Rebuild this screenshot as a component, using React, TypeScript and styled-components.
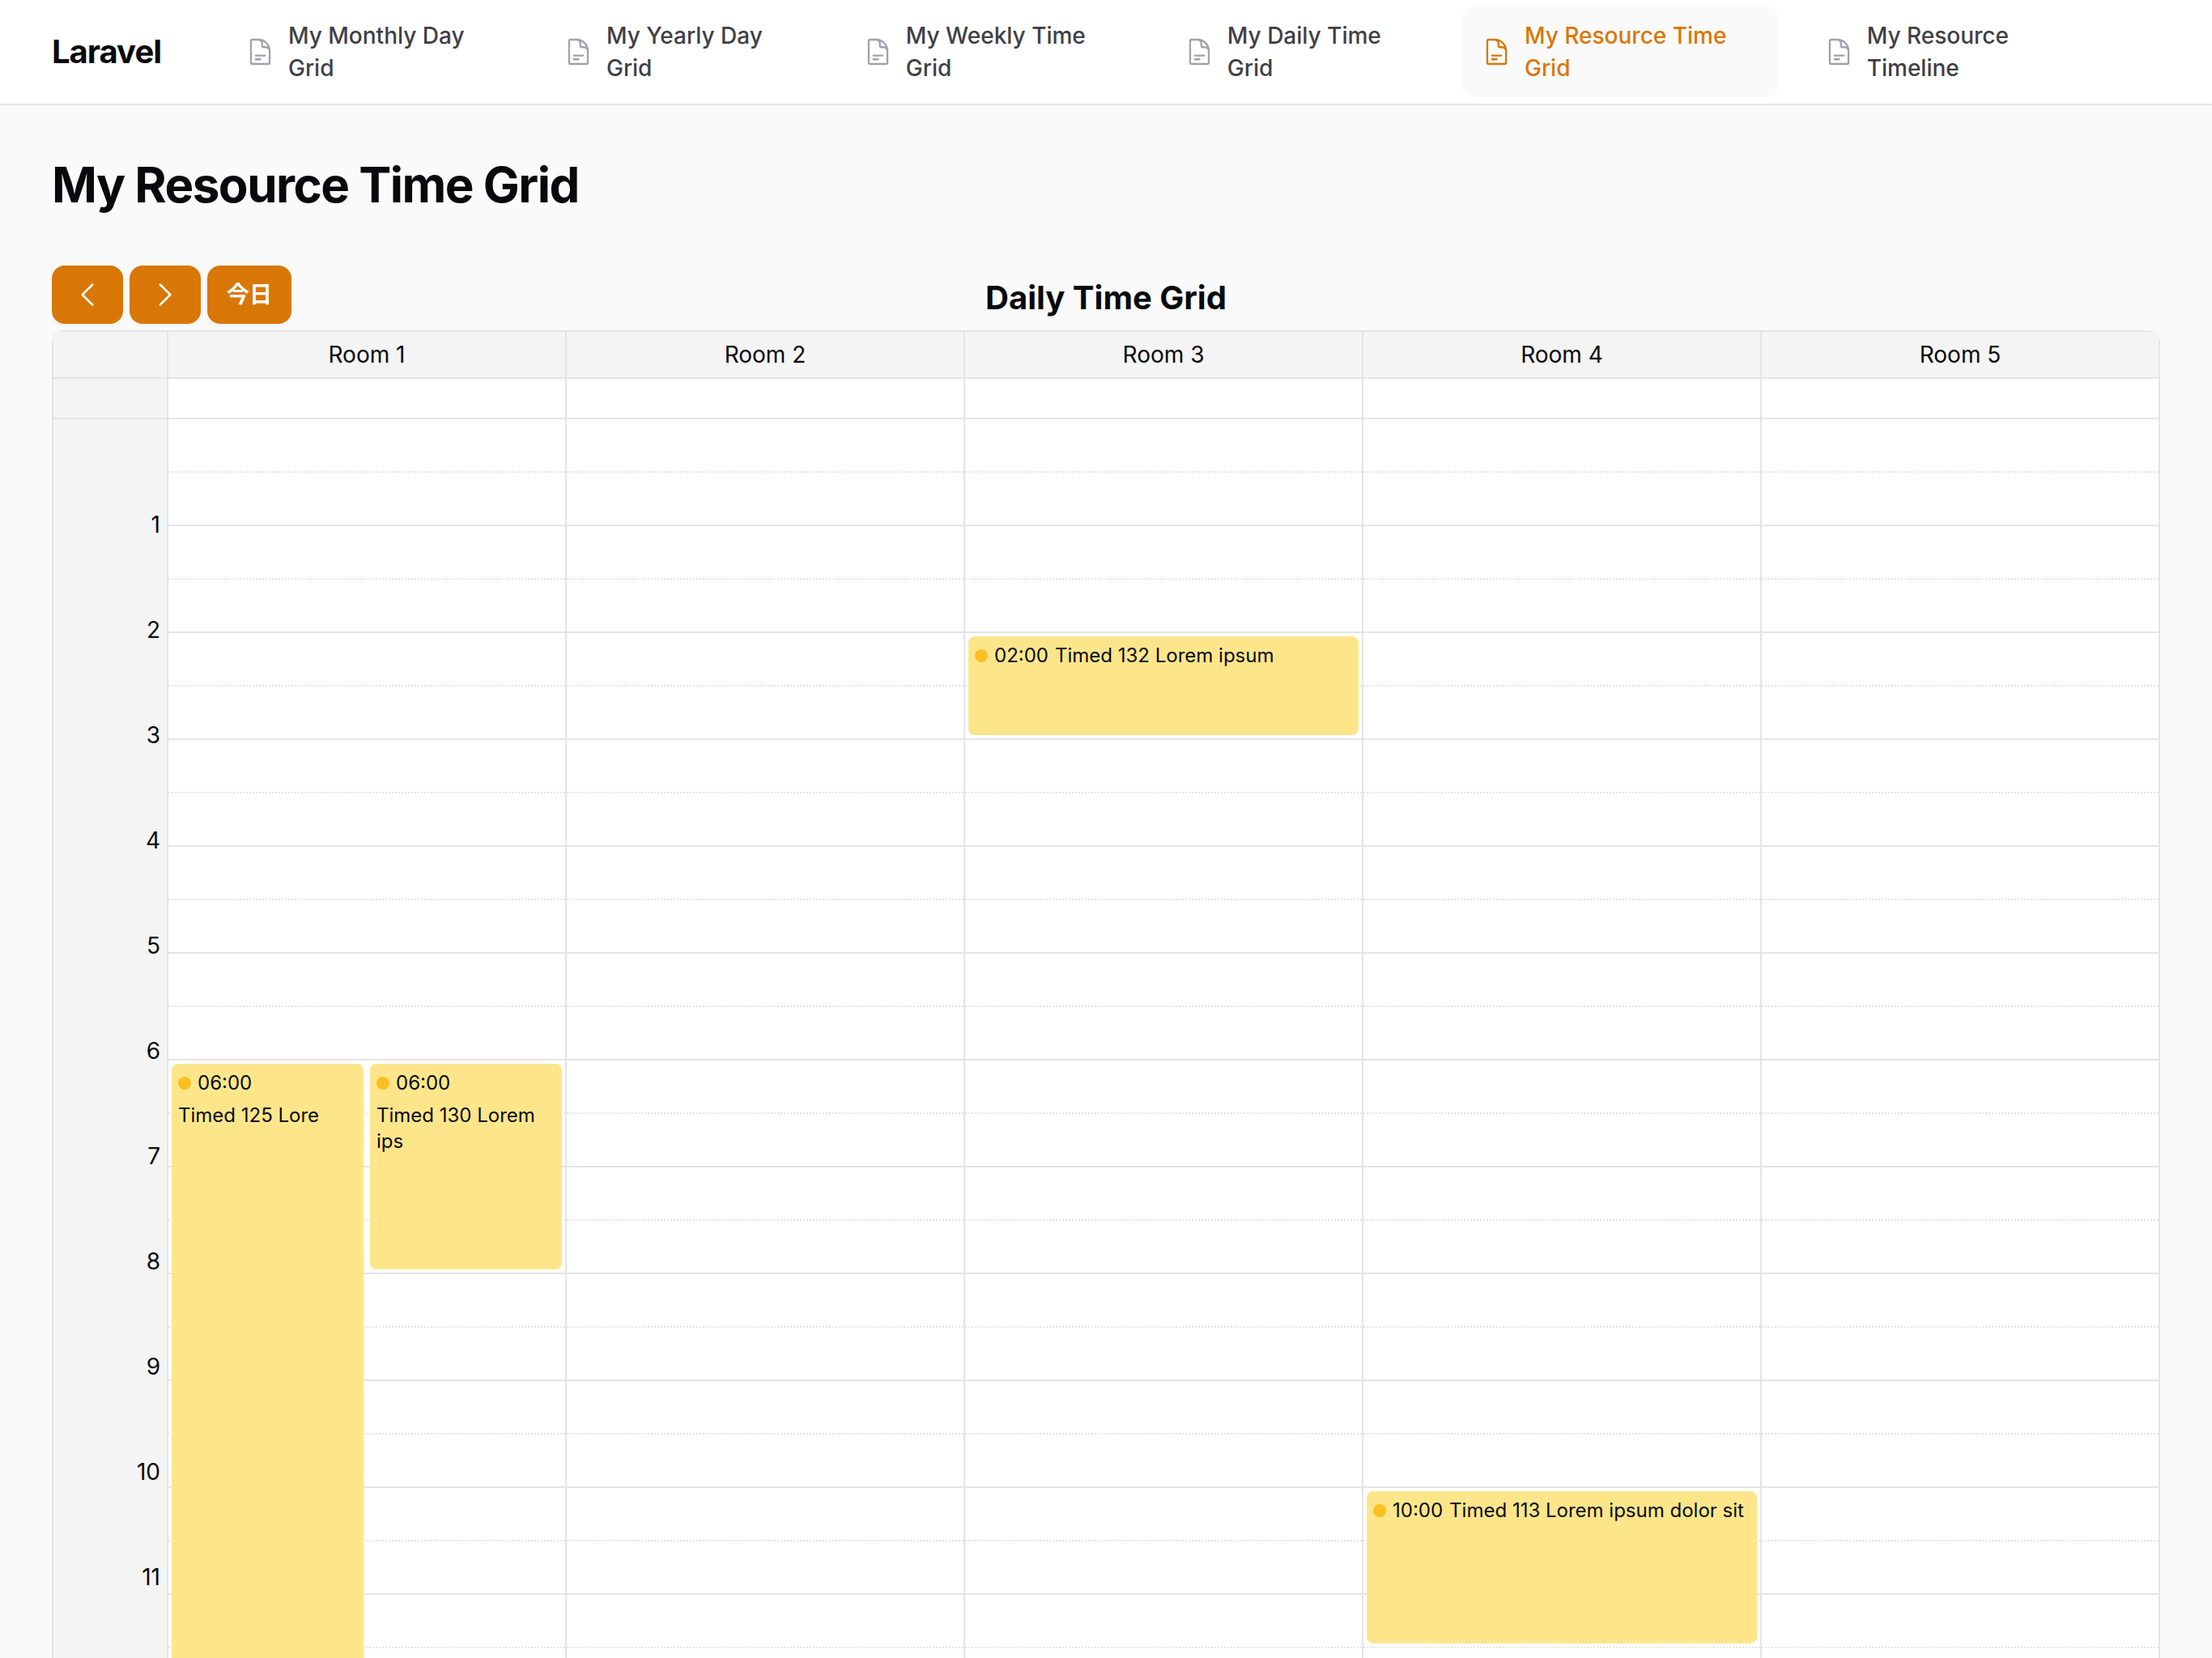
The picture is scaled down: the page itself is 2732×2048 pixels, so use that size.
import React from "react";
import styled, { createGlobalStyle } from "styled-components";

const GlobalStyle = createGlobalStyle`
  *, *::before, *::after { box-sizing: border-box; }
  body {
    margin: 0;
    background: #fafafa;
    color: #09090b;
    font-family: Inter, "Noto Sans CJK JP", sans-serif;
    font-size: 28px;
    line-height: 40px;
    -webkit-font-smoothing: antialiased;
  }
  h1, h2, ul { margin: 0; padding: 0; }
`;

const LINE = "#e4e4e7";
const SIDE = "#f4f4f5";
const HOUR = 132;
const HOURS = 12;

const Shell = styled.div`
  height: 100vh;
  overflow: hidden;
`;

const TopBar = styled.nav`
  display: flex;
  align-items: center;
  height: 128px;
  padding: 0 64px;
  background: #fff;
  box-shadow: 0 0 0 2px rgba(9, 9, 11, 0.05), 0 2px 4px rgba(0, 0, 0, 0.05);
`;

const Brand = styled.a`
  flex: none;
  margin-right: 80px;
  color: #09090b;
  font-size: 40px;
  font-weight: 700;
  letter-spacing: -0.025em;
  text-decoration: none;
`;

const NavList = styled.ul`
  display: flex;
  align-items: center;
  flex: 1;
  gap: 32px;
  min-width: 0;
  margin-right: 64px;
  list-style: none;
`;

const NavLink = styled.a<{ $active?: boolean }>`
  display: flex;
  align-items: center;
  gap: 16px;
  padding: 16px 24px;
  border-radius: 16px;
  background: ${(p) => (p.$active ? "#fafafa" : "transparent")};
  color: ${(p) => (p.$active ? "#d97706" : "#3f3f46")};
  font-weight: 500;
  text-decoration: none;

  svg {
    color: ${(p) => (p.$active ? "#d97706" : "#a1a1aa")};
  }
`;

const NavIcon = styled.svg`
  width: 40px;
  height: 40px;
  min-width: 0;
`;

const Page = styled.main`
  display: flex;
  flex-direction: column;
  gap: 64px;
  padding: 64px;
`;

const PageTitle = styled.h1`
  font-size: 60px;
  line-height: 72px;
  font-weight: 700;
  letter-spacing: -0.025em;
`;

const Toolbar = styled.div`
  display: grid;
  grid-template-columns: 1fr auto 1fr;
  align-items: center;
`;

const ButtonGroup = styled.div`
  display: flex;
  gap: 8px;
  padding-bottom: 8px;
`;

const Button = styled.button`
  display: flex;
  align-items: center;
  justify-content: center;
  padding: 16px 24px;
  border: 0;
  border-radius: 16px;
  background: #d97706;
  color: #fff;
  font: 600 28px/40px Inter, "Noto Sans CJK JP", sans-serif;
  box-shadow: 0 2px 4px rgba(0, 0, 0, 0.05);
  cursor: pointer;

  svg {
    width: 40px;
    height: 40px;
  }
`;

const CalendarTitle = styled.h2`
  font-size: 40px;
  line-height: 56px;
  font-weight: 700;
`;

const Calendar = styled.div`
  border: 2px solid ${LINE};
  border-radius: 16px;
`;

const Row = styled.div`
  display: grid;
  grid-template-columns: 140px repeat(5, minmax(0, 1fr));
`;

const HeadCell = styled.div`
  height: 58px;
  padding: 8px;
  border-bottom: 2px solid ${LINE};
  background: ${SIDE};
  text-align: center;

  & + & {
    border-left: 2px solid ${LINE};
  }
`;

const AllDayCell = styled.div<{ $side?: boolean }>`
  height: 50px;
  border-bottom: 2px solid ${LINE};
  border-left: ${(p) => (p.$side ? "0" : `2px solid ${LINE}`)};
  background: ${(p) => (p.$side ? SIDE : "#fff")};
`;

const HourColumn = styled.div`
  padding: 65px 8px 0;
  background: ${SIDE};
`;

const HourLabel = styled.div`
  display: flex;
  align-items: center;
  justify-content: flex-end;
  height: 130px;
`;

const RoomColumn = styled.div`
  position: relative;
  border-left: 2px solid ${LINE};
  background: #fff;
`;

const HalfSlot = styled.div`
  height: 66px;
  border-bottom: 2px solid ${LINE};

  &:nth-child(odd) {
    border-bottom-style: dotted;
  }
`;

const EventCard = styled.article<{ $start: number; $end: number; $lane: number; $lanes: number }>`
  position: absolute;
  top: ${(p) => p.$start * HOUR + 4}px;
  height: ${(p) => (p.$end - p.$start) * HOUR - 10}px;
  left: calc(${(p) => (100 * p.$lane) / p.$lanes}% + 4px);
  width: calc(${(p) => 100 / p.$lanes}% - 8px);
  display: flex;
  flex-wrap: wrap;
  align-content: flex-start;
  align-items: center;
  gap: 8px;
  padding: 8px;
  border-radius: 8px;
  background: #fde68a;
  font-size: 24px;
  line-height: 32px;
`;

const Dot = styled.span`
  width: 16px;
  height: 16px;
  border-radius: 50%;
  background: #fbbf24;
`;

const navItems = [
  "My Monthly Day Grid",
  "My Yearly Day Grid",
  "My Weekly Time Grid",
  "My Daily Time Grid",
  "My Resource Time Grid",
  "My Resource Timeline",
];

type Booking = { start: number; end: number; time: string; title: string; lane?: number; lanes?: number };

const rooms: { name: string; events: Booking[] }[] = [
  {
    name: "Room 1",
    events: [
      { start: 6, end: 12, time: "06:00", title: "Timed 125 Lore", lane: 0, lanes: 2 },
      { start: 6, end: 8, time: "06:00", title: "Timed 130 Lorem ips", lane: 1, lanes: 2 },
    ],
  },
  { name: "Room 2", events: [] },
  { name: "Room 3", events: [{ start: 2, end: 3, time: "02:00", title: "Timed 132 Lorem ipsum" }] },
  { name: "Room 4", events: [{ start: 10, end: 11.5, time: "10:00", title: "Timed 113 Lorem ipsum dolor sit" }] },
  { name: "Room 5", events: [] },
];

const hourLabels = Array.from({ length: HOURS - 1 }, (_, i) => i + 1);
const halfSlots = Array.from({ length: HOURS * 2 }, (_, i) => i);

const DocumentIcon = () => (
  <NavIcon viewBox="0 0 24 24" fill="none" stroke="currentColor" strokeWidth="1.5" strokeLinecap="round" strokeLinejoin="round" aria-hidden="true">
    <path d="M19.5 14.25v-2.625a3.375 3.375 0 0 0-3.375-3.375h-1.5A1.125 1.125 0 0 1 13.5 7.125v-1.5a3.375 3.375 0 0 0-3.375-3.375H8.25m0 12.75h7.5m-7.5 3H12M10.5 2.25H5.625c-.621 0-1.125.504-1.125 1.125v17.25c0 .621.504 1.125 1.125 1.125h12.75c.621 0 1.125-.504 1.125-1.125V11.25a9 9 0 0 0-9-9Z" />
  </NavIcon>
);

const Chevron = ({ d }: { d: string }) => (
  <svg viewBox="0 0 24 24" fill="none" stroke="currentColor" strokeWidth="1.5" strokeLinecap="round" strokeLinejoin="round" aria-hidden="true">
    <path d={d} />
  </svg>
);

export default function App() {
  return (
    <Shell>
      <GlobalStyle />
      <TopBar>
        <Brand href="#">Laravel</Brand>
        <NavList>
          {navItems.map((label) => (
            <li key={label}>
              <NavLink href="#" $active={label === "My Resource Time Grid"}>
                <DocumentIcon />
                <span>{label}</span>
              </NavLink>
            </li>
          ))}
        </NavList>
      </TopBar>
      <Page>
        <PageTitle>My Resource Time Grid</PageTitle>
        <section>
          <Toolbar>
            <ButtonGroup>
              <Button type="button" aria-label="Previous">
                <Chevron d="M15.75 19.5 8.25 12l7.5-7.5" />
              </Button>
              <Button type="button" aria-label="Next">
                <Chevron d="m8.25 4.5 7.5 7.5-7.5 7.5" />
              </Button>
              <Button type="button">今日</Button>
            </ButtonGroup>
            <CalendarTitle>Daily Time Grid</CalendarTitle>
          </Toolbar>
          <Calendar>
            <Row>
              <HeadCell />
              {rooms.map((room) => (
                <HeadCell key={room.name}>{room.name}</HeadCell>
              ))}
            </Row>
            <Row>
              <AllDayCell $side />
              {rooms.map((room) => (
                <AllDayCell key={room.name} />
              ))}
            </Row>
            <Row>
              <HourColumn>
                {hourLabels.map((hour) => (
                  <HourLabel key={hour}>{hour}</HourLabel>
                ))}
              </HourColumn>
              {rooms.map((room) => (
                <RoomColumn key={room.name}>
                  {halfSlots.map((slot) => (
                    <HalfSlot key={slot} />
                  ))}
                  {room.events.map((event) => (
                    <EventCard key={event.title} $start={event.start} $end={event.end} $lane={event.lane ?? 0} $lanes={event.lanes ?? 1}>
                      <Dot />
                      <time>{event.time}</time>
                      <span>{event.title}</span>
                    </EventCard>
                  ))}
                </RoomColumn>
              ))}
            </Row>
          </Calendar>
        </section>
      </Page>
    </Shell>
  );
}
